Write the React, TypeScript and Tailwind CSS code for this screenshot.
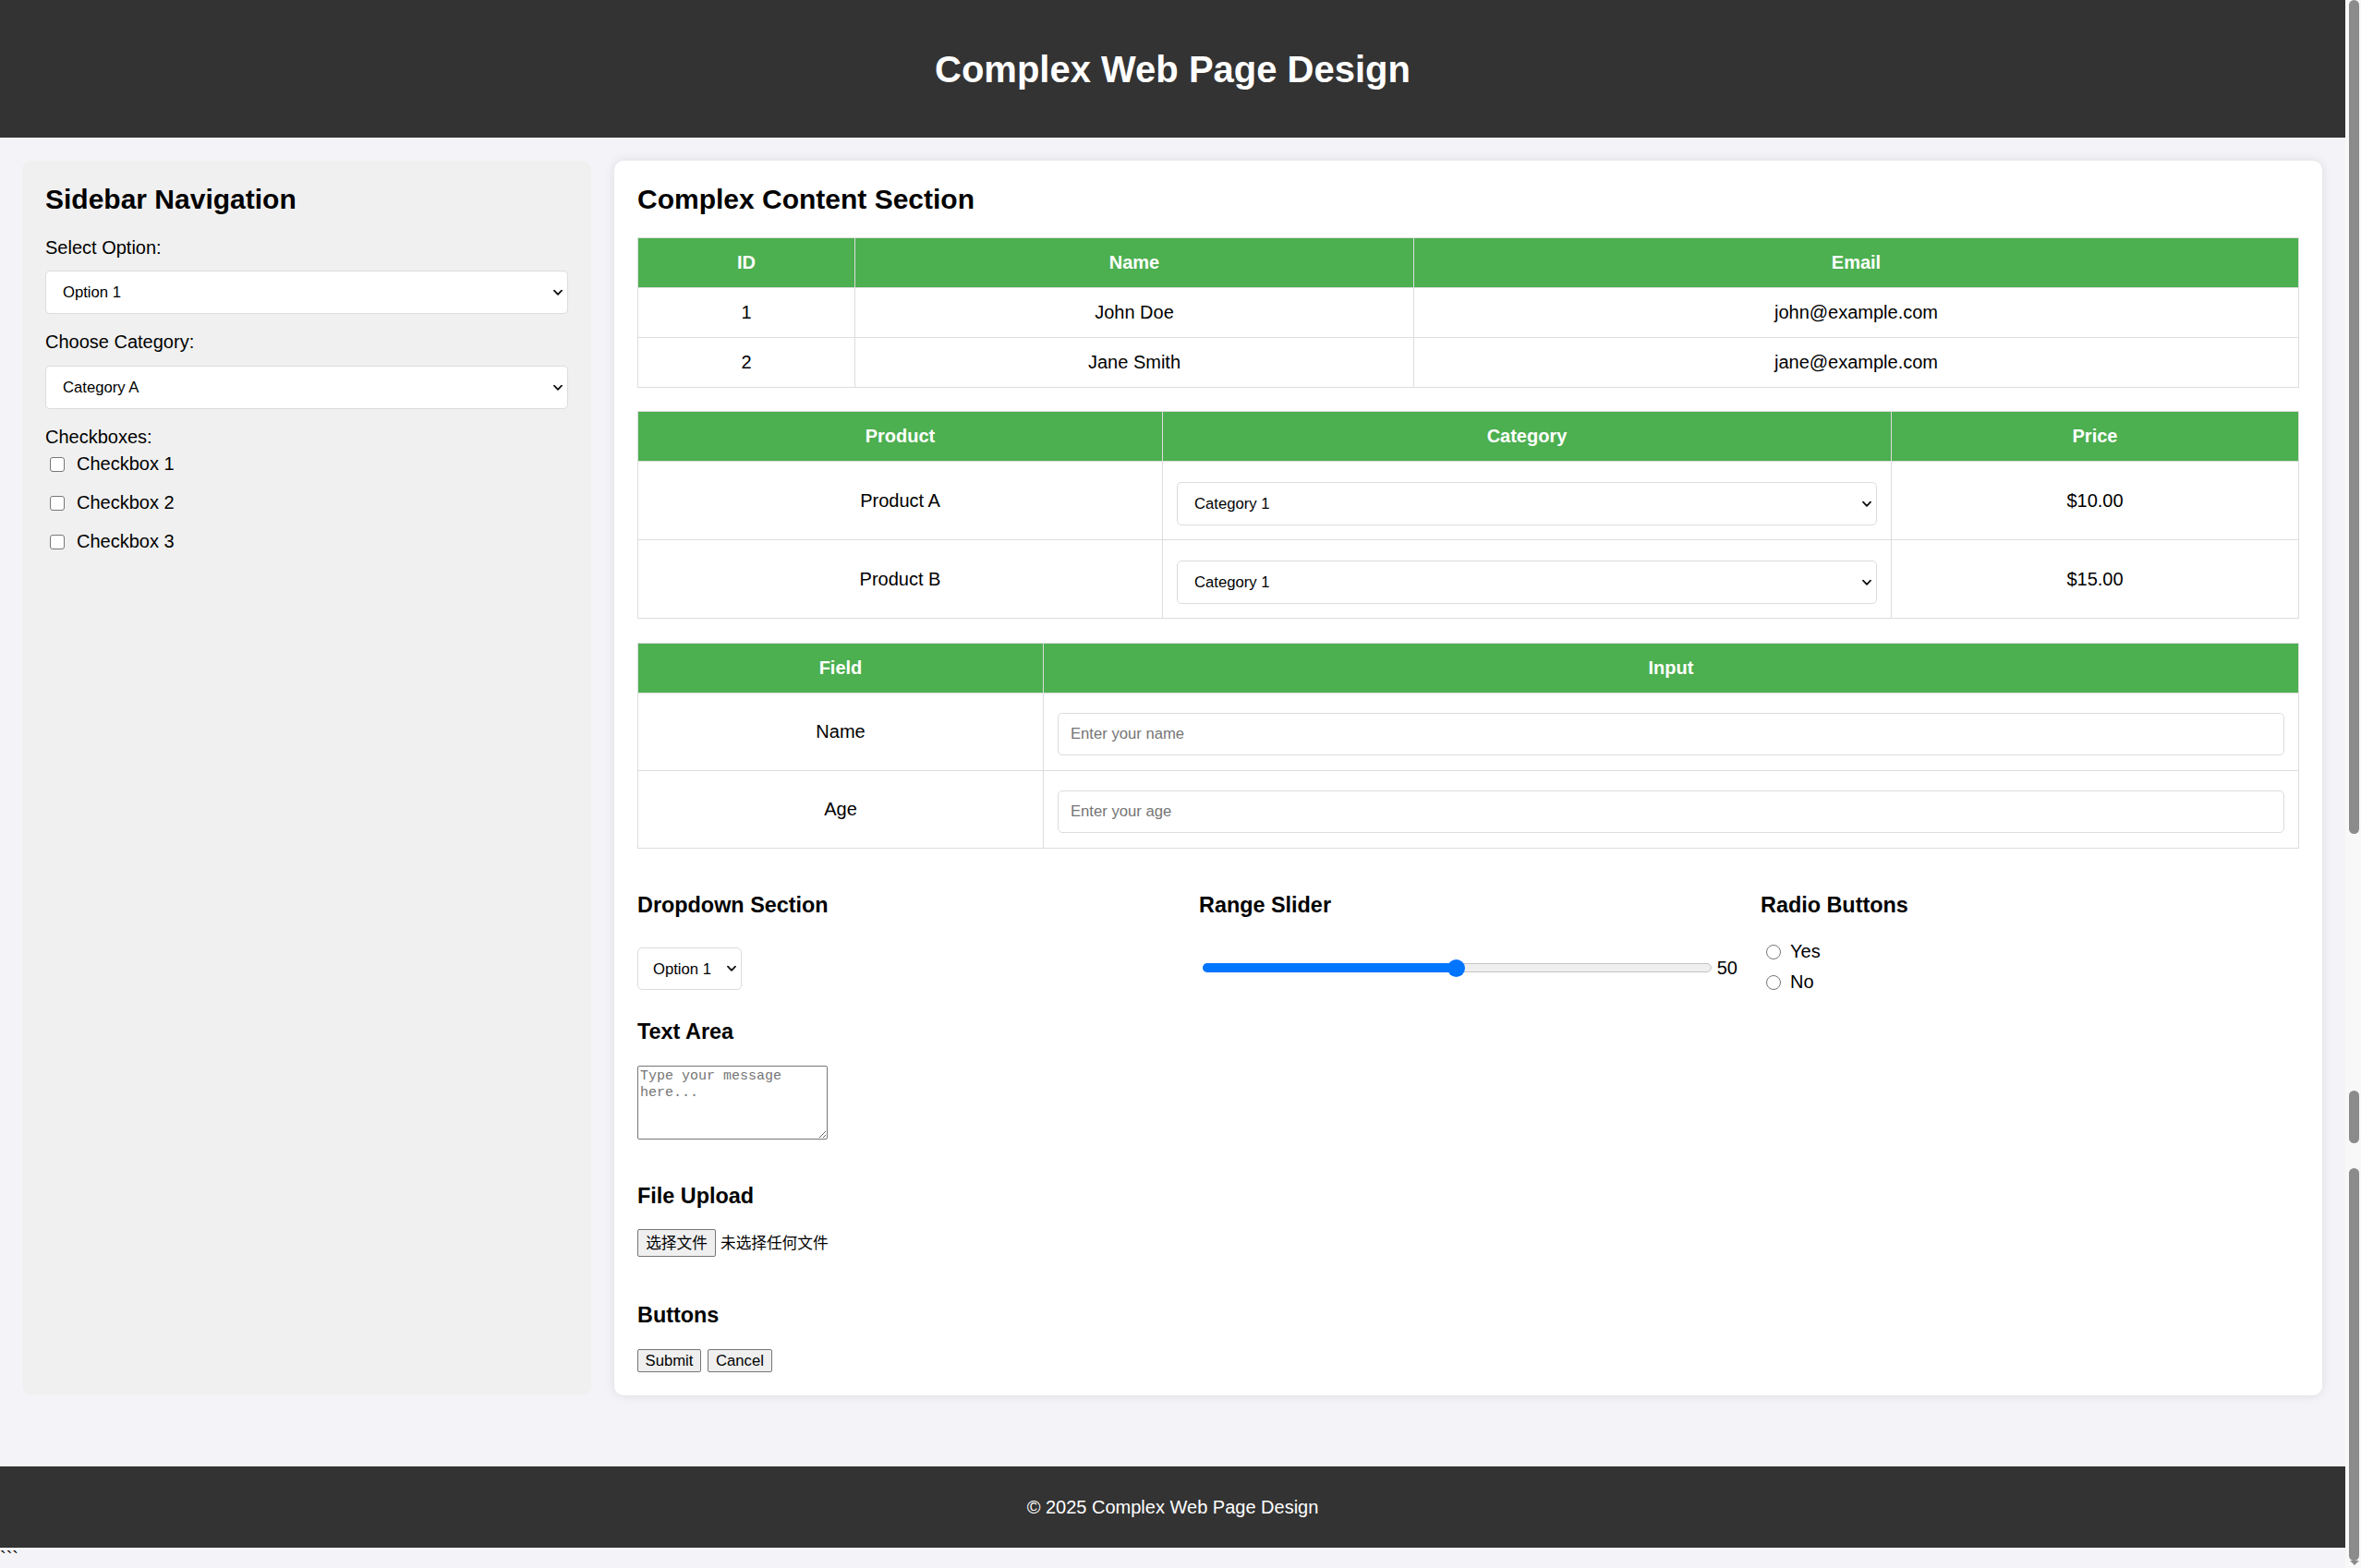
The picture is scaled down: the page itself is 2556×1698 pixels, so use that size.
import React from 'react'

const base = "font-['Liberation_Sans',Arial,sans-serif]"

const Chevron = () => (
  <svg width="10" height="7" viewBox="0 0 10 7">
    <path d="M1 1.2 L5 5.4 L9 1.2" fill="none" stroke="#111" strokeWidth="1.8" strokeLinecap="round" strokeLinejoin="round" />
  </svg>
)

function Select({ options, className, pad }: { options: string[]; className: string; pad: string }) {
  return (
    <div className={`relative ${className}`}>
      <select
        defaultValue={options[0]}
        className={`appearance-none w-full h-full bg-white border border-[#dcdcdc] rounded-[5px] text-[16.67px] text-black outline-none ${pad} ${base}`}
      >
        {options.map((o) => (
          <option key={o}>{o}</option>
        ))}
      </select>
      <span className="pointer-events-none absolute right-[6px] top-1/2 -translate-y-1/2 flex">
        <Chevron />
      </span>
    </div>
  )
}

const th = 'border border-[#dddddd] bg-[#4caf50] text-white font-bold p-[15px] leading-[23px] text-center'
const td = 'border border-[#dddddd] p-[15px] leading-[23px] text-center align-middle'

function Scrollbar() {
  return (
    <div className="w-[17px] shrink-0 bg-[#f8f8f8] flex flex-col pl-[4px] pr-[2px]">
      <div className="h-[903px] bg-[#8b8b8b] rounded-[6px]" />
      <div className="h-[278px]" />
      <div className="h-[57px] bg-[#8b8b8b] rounded-[6px]" />
      <div className="h-[27px]" />
      <div className="h-[425px] bg-[#8b8b8b] rounded-[6px]" />
      <div className="h-[8px] flex justify-center items-start">
        <div className="w-0 h-0 border-l-[5px] border-r-[5px] border-t-[5px] border-l-transparent border-r-transparent border-t-[#8b8b8b]" />
      </div>
    </div>
  )
}

export default function App() {
  return (
    <div className={`flex h-screen overflow-hidden bg-[#f4f4f8] text-black ${base}`}>
      <div className="flex-1 min-w-0 flex flex-col">
        <header className="h-[149px] shrink-0 bg-[#333333] flex items-center justify-center">
          <h1 className="text-[40px] font-bold leading-[46px] text-white">Complex Web Page Design</h1>
        </header>

        <div className="flex gap-[25px] p-[25px] pl-[24px]">
          <aside className="w-[616px] shrink-0 bg-[#f0f0f0] rounded-[10px] p-[25px] text-[20px]">
            <h2 className="text-[30px] font-bold leading-[34px]">Sidebar Navigation</h2>
            <div className="mt-[24px] leading-[23px]">Select Option:</div>
            <Select options={['Option 1', 'Option 2', 'Option 3']} className="mt-[13px] h-[47px] w-full" pad="pl-[18px]" />
            <div className="mt-[19px] leading-[23px]">Choose Category:</div>
            <Select options={['Category A', 'Category B', 'Category C']} className="mt-[14px] h-[47px] w-full" pad="pl-[18px]" />
            <div className="mt-[19px] leading-[23px]">Checkboxes:</div>
            {['Checkbox 1', 'Checkbox 2', 'Checkbox 3'].map((c, i) => (
              <label key={c} className={`flex items-center h-[23px] ${i === 0 ? 'mt-[6px]' : 'mt-[19px]'}`}>
                <input type="checkbox" className="appearance-none ml-[5px] w-[16px] h-[16px] bg-white border border-[#767676] rounded-[3px]" />
                <span className="ml-[13px] leading-[23px]">{c}</span>
              </label>
            ))}
          </aside>

          <main className="flex-1 min-w-0 bg-white rounded-[10px] shadow-[0_0_12px_rgba(0,0,0,0.1)] p-[25px] text-[20px]">
            <h2 className="text-[30px] font-bold leading-[34px]">Complex Content Section</h2>

            <table className="mt-[24px] w-full table-fixed border-collapse">
              <colgroup>
                <col className="w-[235px]" />
                <col className="w-[605px]" />
                <col />
              </colgroup>
              <thead>
                <tr>
                  <th className={th}>ID</th>
                  <th className={th}>Name</th>
                  <th className={th}>Email</th>
                </tr>
              </thead>
              <tbody>
                <tr>
                  <td className={td}>1</td>
                  <td className={td}>John Doe</td>
                  <td className={td}>john@example.com</td>
                </tr>
                <tr>
                  <td className={td}>2</td>
                  <td className={td}>Jane Smith</td>
                  <td className={td}>jane@example.com</td>
                </tr>
              </tbody>
            </table>

            <table className="mt-[25px] w-full table-fixed border-collapse">
              <colgroup>
                <col className="w-[568px]" />
                <col className="w-[789px]" />
                <col />
              </colgroup>
              <thead>
                <tr>
                  <th className={th}>Product</th>
                  <th className={th}>Category</th>
                  <th className={th}>Price</th>
                </tr>
              </thead>
              <tbody>
                {[
                  ['Product A', '$10.00'],
                  ['Product B', '$15.00'],
                ].map(([p, price]) => (
                  <tr key={p}>
                    <td className={td}>{p}</td>
                    <td className={td}>
                      <Select
                        options={['Category 1', 'Category 2', 'Category 3']}
                        className="mt-[7px] h-[47px] w-full"
                        pad="pl-[18px]"
                      />
                    </td>
                    <td className={td}>{price}</td>
                  </tr>
                ))}
              </tbody>
            </table>

            <table className="mt-[26px] w-full table-fixed border-collapse">
              <colgroup>
                <col className="w-[439px]" />
                <col />
              </colgroup>
              <thead>
                <tr>
                  <th className={th}>Field</th>
                  <th className={th}>Input</th>
                </tr>
              </thead>
              <tbody>
                {[
                  ['Name', 'Enter your name'],
                  ['Age', 'Enter your age'],
                ].map(([f, ph]) => (
                  <tr key={f}>
                    <td className={td}>{f}</td>
                    <td className={td}>
                      <input
                        type="text"
                        placeholder={ph}
                        className={`block mt-[6px] mb-[1px] w-full h-[46px] px-[13px] bg-white border border-[#dcdcdc] rounded-[5px] text-[16.67px] outline-none placeholder:text-[#757575] ${base}`}
                      />
                    </td>
                  </tr>
                ))}
              </tbody>
            </table>

            <div className="mt-[48px] grid grid-cols-3 gap-x-[25px]">
              <div>
                <h3 className="text-[23.4px] font-bold leading-[27px]">Dropdown Section</h3>
                <Select options={['Option 1', 'Option 2']} className="mt-[32px] h-[46px] w-[113px]" pad="pl-[16px]" />
              </div>
              <div>
                <h3 className="text-[23.4px] font-bold leading-[27px]">Range Slider</h3>
                <div className="mt-[44px] h-[20px] flex items-center">
                  <div className="relative ml-[4px] w-[551px] h-[19px] flex items-center">
                    <div className="w-full h-[10px] rounded-full bg-[#efefef] border border-[#c4c4c4]" />
                    <div className="absolute left-0 top-[4.5px] h-[10px] w-[276px] rounded-full bg-[#0075ff]" />
                    <div className="absolute left-[265px] top-0 w-[19px] h-[19px] rounded-full bg-[#0075ff]" />
                  </div>
                  <span className="ml-[6px] leading-[23px]">50</span>
                </div>
              </div>
              <div>
                <h3 className="text-[23.4px] font-bold leading-[27px]">Radio Buttons</h3>
                {['Yes', 'No'].map((r, i) => (
                  <label key={r} className={`flex items-center h-[23px] ${i === 0 ? 'mt-[25px]' : 'mt-[10px]'}`}>
                    <input type="radio" name="yn" className="appearance-none ml-[6px] w-[16px] h-[16px] rounded-full bg-white border border-[#767676]" />
                    <span className="ml-[10px] leading-[23px]">{r}</span>
                  </label>
                ))}
              </div>
            </div>

            <h3 className="mt-[29px] text-[23.4px] font-bold leading-[27px]">Text Area</h3>
            <textarea
              placeholder="Type your message here..."
              className="block mt-[23px] w-[206px] h-[80px] pl-[2px] pr-[22px] py-[2px] border border-[#767676] rounded-[2px] bg-white font-['Liberation_Mono',monospace] text-[15px] leading-[18px] outline-none placeholder:text-[#757575]"
            />

            <h3 className="mt-[48px] text-[23.4px] font-bold leading-[27px]">File Upload</h3>
            <div className="mt-[22px] flex items-center h-[30px] font-['Liberation_Sans','Noto_Sans_CJK_SC',sans-serif] text-[16.67px]">
              <span className="h-[30px] w-[85px] flex items-center justify-center bg-[#efefef] border border-[#767676] rounded-[2px]">选择文件</span>
              <span className="ml-[5px]">未选择任何文件</span>
            </div>

            <h3 className="mt-[50px] text-[23.4px] font-bold leading-[27px]">Buttons</h3>
            <div className="mt-[23px] flex gap-[7px]">
              <button className="h-[25px] w-[69px] bg-[#efefef] border border-[#767676] rounded-[2px] text-[16.67px] leading-[20px]">Submit</button>
              <button className="h-[25px] w-[70px] bg-[#efefef] border border-[#767676] rounded-[2px] text-[16.67px] leading-[20px]">Cancel</button>
            </div>
          </main>
        </div>

        <footer className="mt-[52px] h-[88px] shrink-0 bg-[#333333] flex items-center justify-center text-white text-[20px]">
          © 2025 Complex Web Page Design
        </footer>
        <div className="text-[20px] leading-[22px]">```</div>
      </div>
      <Scrollbar />
    </div>
  )
}
